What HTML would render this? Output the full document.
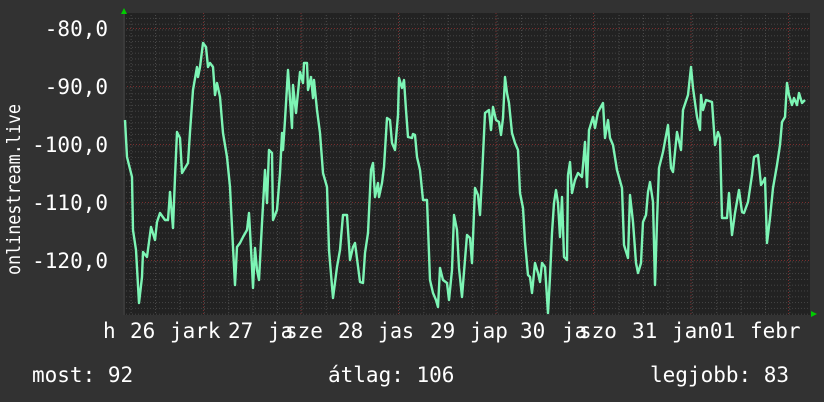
<!DOCTYPE html>
<html><head><meta charset="utf-8"><style>
html,body{margin:0;padding:0;background:#323232;}
svg{display:block}
text{font-family:"DejaVu Sans Mono","Liberation Mono",monospace;fill:#fff}
</style></head><body>
<svg width="824" height="402" viewBox="0 0 824 402" xmlns="http://www.w3.org/2000/svg">
<defs>
<pattern id="mh" x="0" y="0.5" width="824" height="5.8" patternUnits="userSpaceOnUse">
<line x1="0" y1="0.5" x2="824" y2="0.5" stroke="#454545" stroke-width="1" stroke-dasharray="1,2"/>
</pattern>
<pattern id="mv" x="8.6" y="0" width="24.4" height="402" patternUnits="userSpaceOnUse">
<line x1="0.5" y1="0" x2="0.5" y2="402" stroke="#4a4a4a" stroke-width="1" stroke-dasharray="1,2"/>
</pattern>
</defs>
<rect x="0" y="0" width="824" height="402" fill="#323232"/>
<rect x="124" y="13" width="686" height="302" fill="#222222"/>
<rect x="124" y="13" width="686" height="302" fill="url(#mh)"/>
<rect x="124" y="13" width="686" height="302" fill="url(#mv)"/>
<g stroke="#7a2e2e" stroke-width="1" stroke-dasharray="1,2">
<line x1="124" y1="28.5" x2="810" y2="28.5"/>
<line x1="124" y1="86.5" x2="810" y2="86.5"/>
<line x1="124" y1="144.5" x2="810" y2="144.5"/>
<line x1="124" y1="202.5" x2="810" y2="202.5"/>
<line x1="124" y1="260.5" x2="810" y2="260.5"/>
<line x1="203.5" y1="13" x2="203.5" y2="315"/>
<line x1="301" y1="13" x2="301" y2="315"/>
<line x1="398.5" y1="13" x2="398.5" y2="315"/>
<line x1="496" y1="13" x2="496" y2="315"/>
<line x1="593.5" y1="13" x2="593.5" y2="315"/>
<line x1="691" y1="13" x2="691" y2="315"/>
<line x1="788.5" y1="13" x2="788.5" y2="315"/>
</g>
<rect x="123" y="13" width="2" height="302" fill="#3a3a3a"/>
<polygon points="121,14 127,14 124,8" fill="#00cc00"/>
<polygon points="811,311 811,317 817,314" fill="#00cc00"/>
<polyline fill="none" stroke="#7df5b5" stroke-width="2.4" stroke-linejoin="round" points="
125,120 127,157 132,177 133,230 136,250 139,303 142,277 143,252 147,257 151,227 155,240 157,222 160,213 165,220 168,220 170,192 173,228 175,177 177,132 180,138 182,173 185,168 188,163 190,132 193,90 197,67 198,77 200,67 203,43 206,47 208,67 210,63 213,67 215,95 217,83 220,97 223,133 227,157 230,187 233,247 235,285 237,247 240,243 243,237 247,230 249,213 252,267 253,288 255,248 257,270 259,280 262,223 265,170 267,203 269,150 272,153 273,220 277,210 280,173 282,133 283,150 285,120 288,70 292,128 293,85 296,113 300,72 303,83 304,63 307,63 308,90 311,77 313,98 314,80 317,110 320,133 323,173 327,187 329,250 333,298 337,267 340,250 343,215 347,215 350,260 353,247
355,243 360,282 363,283 365,253 368,233 371,170 373,163 375,197 378,183 379,197 382,183 384,167 387,118 390,120 392,143 395,150 398,115 399,78 402,88 404,80 406,110 408,137 412,138 413,134 415,135 417,157 420,170 423,200 427,200 430,280 433,293 436,300 438,307 440,268 443,280 447,283 449,300 452,270 454,215 457,230 459,268 462,297 464,272 467,235 470,238 472,263 475,188 478,195 480,215 482,177 485,113 489,110 491,130 493,107 496,120 499,122 501,135 503,118 505,77 507,93 509,103 512,133 515,143 518,150 520,193 523,208 525,242 528,275 530,277 532,293 535,263 538,273 540,282 542,263 545,267 548,313 550,277 552,233 554,203 556,190 558,203 560,237 562,197 564,257 567,260 568,175 570,162 572,193 575,180 578,173 582,177 585,142 587,187 589,130
590,127 593,117 595,128 598,112 603,103 605,138 608,120 610,138 613,145 617,170 622,188 624,245 628,258 630,195 633,222 636,263 638,273 641,263 643,222 646,215 648,192 650,182 653,202 655,285 657,222 659,168 663,152 668,125 671,168 673,172 677,132 681,150 683,110 688,95 691,67 693,88 697,117 700,130 701,95 703,110 706,100 712,102 715,145 718,132 720,138 722,218 727,218 729,193 732,235 735,213 739,190 742,212 744,213 748,202 752,175 754,157 758,155 761,185 763,182 765,178 767,243 770,218 773,188 777,165 780,145 782,122 785,117 787,83 789,95 792,105 794,98 797,105 799,93 802,103 805,100"/>
<g font-size="21" text-anchor="end">
<text x="108" y="36">-80,0</text>
<text x="108" y="94">-90,0</text>
<text x="108" y="152">-100,0</text>
<text x="108" y="210">-110,0</text>
<text x="108" y="268">-120,0</text>
</g>
<text font-size="19" transform="translate(20,275) rotate(-90)" textLength="171" lengthAdjust="spacingAndGlyphs">onlinestream.live</text>
<g font-size="21">
<text x="103" y="338">h</text>
<text x="130" y="338">26</text>
<text x="170" y="338">jark</text>
<text x="228" y="338">27</text>
<text x="268" y="338">ja</text>
<text x="285" y="338">sze</text>
<text x="338" y="338">28</text>
<text x="378" y="338" textLength="36" lengthAdjust="spacingAndGlyphs">jas</text>
<text x="430" y="338">29</text>
<text x="470" y="338">jap</text>
<text x="520" y="338">30</text>
<text x="562" y="338">ja</text>
<text x="579" y="338">szo</text>
<text x="632" y="338">31</text>
<text x="672" y="338">jan01</text>
<text x="750" y="338">febr</text>
<text x="32" y="382">most: 92</text>
<text x="328" y="382">átlag: 106</text>
<text x="650" y="382">legjobb: 83</text>
</g>
</svg>
</body></html>
